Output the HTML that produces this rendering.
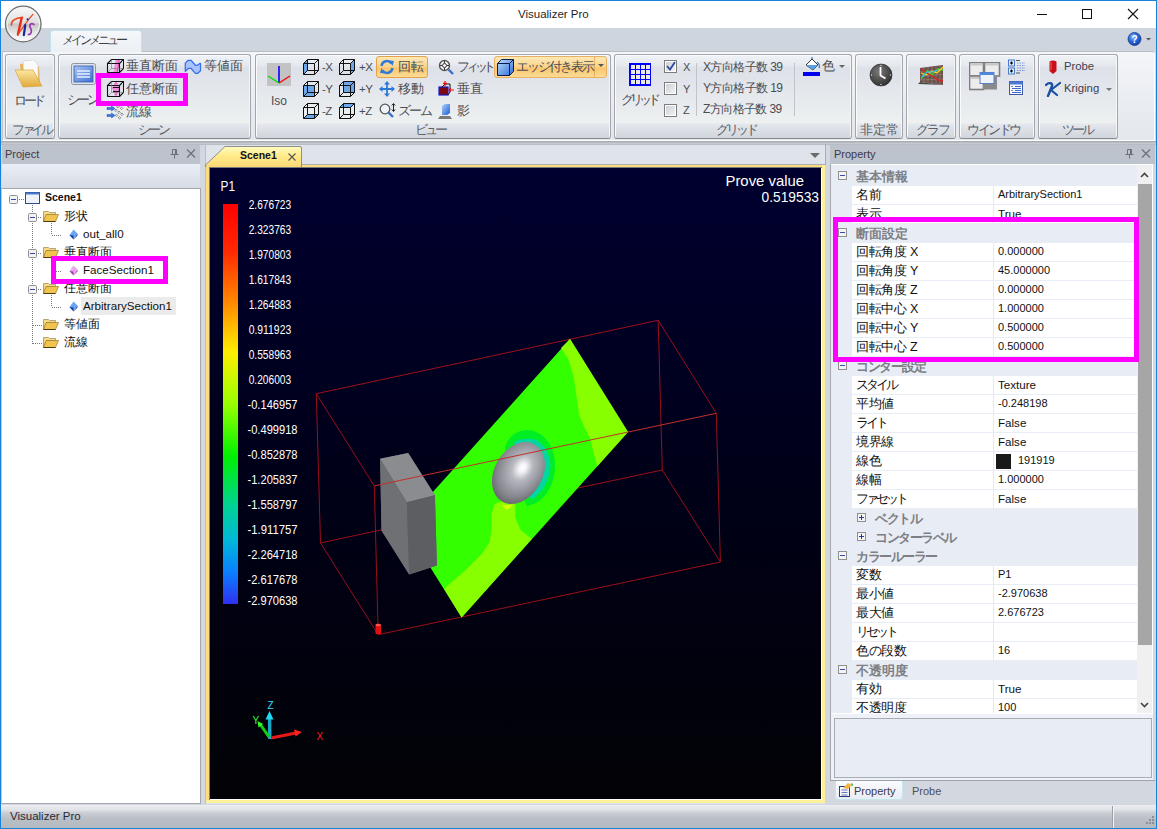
<!DOCTYPE html>
<html><head><meta charset="utf-8">
<style>
*{box-sizing:border-box;margin:0;padding:0}
html,body{width:1157px;height:829px;overflow:hidden}
body{position:relative;background:#d3d8e0;font-family:"Liberation Sans",sans-serif;font-size:12px;color:#333}
.a{position:absolute}
.t{position:absolute;white-space:nowrap;line-height:1}
/* window */
#title{left:0;top:0;width:1157px;height:28px;background:#fff}
#tabrow{left:0;top:28px;width:1157px;height:24px;background:#cfd5de}
#ribbon{left:2px;top:51px;width:1153px;height:90px;border-radius:0 4px 0 0;background:linear-gradient(#f4f6f9,#e9ecf1 60%,#e4e7ec);border:1px solid #fff;border-top-color:#b9bdc3;border-left-color:#c4c4c8}
.grp{position:absolute;top:2px;height:85px;border:1px solid #a3a7ad;border-bottom-color:#878b91;border-radius:3px;box-shadow:inset 1px 1px 0 #fafbfc,inset -1px 0 0 #f4f6f8;background:linear-gradient(#eff2f6 0,#e6e9ef 10px,#dde1e8 13px,#e5e8ed 40px,#eef1f0 68px,#e4e7ee 69px,#cfd3da 84px)}
.gl{position:absolute;bottom:1px;left:0;right:0;text-align:center;color:#595d63;font-size:13px;line-height:14px}
.rt{position:absolute;white-space:nowrap;font-size:13px;line-height:14px;color:#4a4d53}
.ph{position:absolute;top:145px;height:19px;background:#bcc3cd}
#status{left:1px;top:805px;width:1155px;height:23px;background:linear-gradient(#eceef1 0,#dfe2e6 5px,#c9cdd3 8px,#babec5 14px,#b5b9c0 23px)}
.bd{position:absolute;background:#1a82d8}
</style></head>
<body>
<div class="a" id="title"></div>
<div class="a" id="tabrow"></div>
<div class="a" style="left:1px;top:141px;width:1155px;height:4px;background:linear-gradient(#a0a4ab,#c6cad0 60%,#b2b6bd)"></div>
<div class="a" id="ribbon">
  <div class="grp" style="left:2px;width:50px"></div>
  <div class="grp" style="left:55px;width:193px"></div>
  <div class="grp" style="left:252px;width:356px"></div>
  <div class="grp" style="left:611px;width:238px"></div>
  <div class="grp" style="left:852px;width:48px"></div>
  <div class="grp" style="left:903px;width:50px"></div>
  <div class="grp" style="left:956px;width:76px"></div>
  <div class="grp" style="left:1035px;width:80px"></div>
</div>


<!-- title contents -->
<div class="t" style="left:518px;top:9px;font-size:11.5px;color:#1f1f1f">Visualizer Pro</div>
<div class="a" style="left:1037px;top:14px;width:10px;height:1px;background:#111"></div>
<div class="a" style="left:1082px;top:9px;width:10px;height:10px;border:1px solid #111"></div>
<svg class="a" style="left:1127px;top:8px" width="12" height="12"><path d="M1 1L11 11M11 1L1 11" stroke="#111" stroke-width="1.1"/></svg>
<!-- logo -->
<svg class="a" style="left:3px;top:4px" width="42" height="42" viewBox="0 0 42 42">
 <defs>
  <linearGradient id="lg1" x1="0" y1="0" x2="0" y2="1"><stop offset="0" stop-color="#fbfbfb"/><stop offset="0.47" stop-color="#dedede"/><stop offset="0.5" stop-color="#c6c6c6"/><stop offset="0.75" stop-color="#e6e6e6"/><stop offset="1" stop-color="#ffffff"/></linearGradient>
 </defs>
 <circle cx="20.25" cy="20" r="17.8" fill="url(#lg1)" stroke="#6e6e6e" stroke-width="1.2"/>
 <circle cx="20.25" cy="20" r="16.3" fill="none" stroke="#f4f4f4" stroke-width="1"/>
 <path d="M8.4 21 C8 17 12 14 19.5 13.4" stroke="#ec4a1c" stroke-width="1.6" fill="none" stroke-linecap="round"/>
 <path d="M18.6 14.2 C17.5 19 16 25 14.9 30.6" stroke="#ee2a18" stroke-width="2.4" fill="none" stroke-linecap="round"/>
 <path d="M14.9 30.6 C20 23 25 16 29.9 10.4" stroke="#e84a20" stroke-width="1.3" fill="none" stroke-linecap="round"/>
 <path d="M22.3 21 L20.8 31.2" stroke="#1828a0" stroke-width="2.2" stroke-linecap="round"/>
 <circle cx="24.6" cy="15.3" r="1.1" fill="#1a30b0"/>
 <path d="M31 20.5 C28 18.5 25.5 21 27.5 24 C29.5 27 28 31 25.3 30.5" stroke="#9a3ab0" stroke-width="1.7" fill="none" stroke-linecap="round"/>
</svg>
<!-- menu tab -->
<div class="a" style="left:50px;top:30px;width:92px;height:22px;border:1px solid #bfe3ea;border-bottom:none;border-radius:3px 3px 0 0;background:linear-gradient(#f5f7fa,#eceff4)"></div>
<div class="t" style="left:62px;top:34px;font-size:12px;color:#3d3f44;letter-spacing:-3px">メインメニュー</div>
<!-- help -->
<svg class="a" style="left:1127px;top:32px" width="28" height="14" viewBox="0 0 28 14">
 <defs><radialGradient id="hg" cx="40%" cy="35%" r="65%"><stop offset="0" stop-color="#9cc4ff"/><stop offset="0.5" stop-color="#2a6ee0"/><stop offset="1" stop-color="#1740a8"/></radialGradient></defs>
 <circle cx="7.5" cy="7" r="6.5" fill="url(#hg)" stroke="#1a3c8a" stroke-width="0.8"/>
 <text x="7.5" y="11" font-size="10" font-weight="bold" fill="#fff" text-anchor="middle" font-family="Liberation Sans">?</text>
 <path d="M19 6h5l-2.5 2.5z" fill="#555"/>
</svg>


<!-- ===== ribbon contents ===== -->
<!-- group labels -->
<div class="rt" style="left:12px;top:123px;letter-spacing:-3.5px;color:#5a5e66">ファイル</div>
<div class="rt" style="left:138px;top:123px;letter-spacing:-3px;color:#5a5e66">シーン</div>
<div class="rt" style="left:415px;top:123px;letter-spacing:-3px;color:#5a5e66">ビュー</div>
<div class="rt" style="left:716px;top:123px;letter-spacing:-3px;color:#5a5e66">グリッド</div>
<div class="rt" style="left:860px;top:123px;color:#5a5e66">非定常</div>
<div class="rt" style="left:916px;top:123px;letter-spacing:-2px;color:#5a5e66">グラフ</div>
<div class="rt" style="left:967px;top:123px;letter-spacing:-2.5px;color:#5a5e66">ウインドウ</div>
<div class="rt" style="left:1062px;top:123px;letter-spacing:-3px;color:#5a5e66">ツール</div>

<!-- File -->
<svg class="a" style="left:14px;top:60px" width="30" height="28" viewBox="0 0 30 28">
 <defs><linearGradient id="fd" x1="0" y1="0" x2="0" y2="1"><stop offset="0" stop-color="#fbe7a2"/><stop offset="1" stop-color="#e2a93a"/></linearGradient></defs>
 <path d="M6 4 L20 2 L25 7 L26 24 L8 25z" fill="#e9b350"/>
 <path d="M9 1 L20 0 L24 5 L24 20 L10 22z" fill="#fafafa" stroke="#cfcfcf" stroke-width="0.6"/>
 <path d="M1 10 L19 10 L28 26 L9 27z" fill="url(#fd)" stroke="#d69a2c" stroke-width="0.6"/>
</svg>
<div class="rt" style="left:14px;top:94px;letter-spacing:-3.5px">ロード</div>

<!-- Scene -->
<svg class="a" style="left:71px;top:63px" width="25" height="22" viewBox="0 0 25 22">
 <defs><linearGradient id="sc" x1="0" y1="0" x2="1" y2="1"><stop offset="0" stop-color="#a9c6f3"/><stop offset="1" stop-color="#3f6fd0"/></linearGradient></defs>
 <rect x="0.5" y="0.5" width="24" height="21" rx="2" fill="#dfe4ec" stroke="#8d96a3"/>
 <rect x="3" y="3" width="19" height="16" fill="url(#sc)" stroke="#2f57a8" stroke-width="0.8"/>
 <path d="M6 8h13M6 11h13M6 14h13" stroke="#e8f0ff" stroke-width="1.4"/>
</svg>
<div class="rt" style="left:67px;top:93px;letter-spacing:-3px">シーン</div>

<!-- cube with plane icons -->
<svg class="a" style="left:106px;top:58px" width="18" height="16" viewBox="106 58 18 16">
 <path d="M115.5 59.5 L119.5 59.5 L117.5 72.5 L113.5 72.5z" fill="#f58ee0"/>
 <path d="M119.3 59.5 L117.3 72.5" stroke="#e020b0" stroke-width="0.8"/>
 <g fill="none" stroke="#111" stroke-width="1.1">
  <path d="M107.5 63.5 H119.5 V72.5 H107.5z"/>
  <path d="M107.5 63.5 L111.5 59.5 H123.5 L119.5 63.5 M123.5 59.5 V68.5 L119.5 72.5"/>
 </g>
 <path d="M111.5 59.5 V68.5 H123.5 M111.5 68.5 L107.5 72.5" stroke="#777" stroke-width="0.6" fill="none"/>
</svg>
<div class="rt" style="left:126px;top:59px">垂直断面</div>
<svg class="a" style="left:184px;top:59px" width="18" height="16" viewBox="184 59 18 16">
 <path d="M185.3 63.1 L188.1 60.3 L190.9 60.3 L195.4 65.3 L197.2 65.3 L200.2 63.3 L200.5 63.3 L200.5 70.7 L197.5 73.4 L195.4 73.4 L190.9 68.3 L188.4 68.3 L185.3 71.4z" fill="#a9c4fa" stroke="#3a6ef0" stroke-width="1.3" stroke-linejoin="round"/>
</svg>
<div class="rt" style="left:204px;top:59px">等値面</div>
<svg class="a" style="left:106px;top:80px" width="18" height="18" viewBox="106 80 18 18">
 <path d="M116 81.5 L119.5 88 L116 96.5 L112.5 88z" fill="#f58ee0" stroke="#e020b0" stroke-width="0.8" stroke-dasharray="1.2 0.8"/>
 <g fill="none" stroke="#111" stroke-width="1.1">
  <path d="M107.5 85.5 H119.5 V96.5 H107.5z"/>
  <path d="M107.5 85.5 L111.5 81.5 H123.5 L119.5 85.5 M123.5 81.5 V92.5 L119.5 96.5"/>
 </g>
 <path d="M111.5 81.5 V92.5 H123.5 M111.5 92.5 L107.5 96.5" stroke="#777" stroke-width="0.6" fill="none"/>
 <path d="M113 87.5 H119 M113 91.5 H119" stroke="#111" stroke-width="1"/>
</svg>
<div class="rt" style="left:126px;top:82px">任意断面</div>
<svg class="a" style="left:106px;top:104px" width="18" height="17" viewBox="106 104 18 17">
 <path d="M107 107.5 H111.5 V106 L115 108.5 L111.5 111 V109.5 H107z M107 114.5 H111.5 V113 L115 115.5 L111.5 118 V116.5 H107z" fill="#3a78e0" stroke="#1f4fb0" stroke-width="0.5"/>
 <g fill="none" stroke="#666" stroke-width="0.7">
  <path d="M118 105.3l1.3 1.3-1.3 1.3-1.3-1.3z M121.5 107l1.3 1.3-1.3 1.3-1.3-1.3z M116 109l1.3 1.3-1.3 1.3-1.3-1.3z M119 111l1.3 1.3-1.3 1.3-1.3-1.3z M122 113l1.3 1.3-1.3 1.3-1.3-1.3z M116.5 114l1.3 1.3-1.3 1.3-1.3-1.3z M119.5 116.5l1.3 1.3-1.3 1.3-1.3-1.3z"/>
 </g>
</svg>
<div class="rt" style="left:126px;top:105px">流線</div>
<!-- magenta box scene -->
<div class="a" style="left:96px;top:73px;width:92px;height:33px;border:5px solid #ff00ff"></div>


<!-- View -->
<svg class="a" style="left:267px;top:63px" width="24" height="23" viewBox="0 0 24 23">
 <rect width="24" height="23" fill="#c3c3c3"/>
 <path d="M12 3V20" stroke="#0000ff" stroke-width="1.6"/>
 <path d="M12 20L1 13" stroke="#00e000" stroke-width="1.4"/>
 <path d="M12 20L23 13" stroke="#ff0000" stroke-width="1.4"/>
</svg>
<div class="t" style="left:271px;top:95px;font-size:12px;color:#4a4d53">Iso</div>
<svg class="a" style="left:303px;top:59px" width="17" height="17" viewBox="0 0 17 17"><path d="M0.5 4.5 L4.5 0.5 V11.5 L0.5 15.5z" fill="#6ea6ea"/><path d="M0.5 4.5h11v11h-11z M0.5 4.5 L4.5 0.5 h11 v11 l-4 4 M11.5 4.5 l4 -4 M4.5 0.5v11h11 M4.5 11.5l-4 4" fill="none" stroke="#111" stroke-width="1"/></svg><div class="t" style="left:322px;top:62px;font-size:11.5px;color:#4a4d53;letter-spacing:-0.5px">-X</div>
<svg class="a" style="left:339px;top:59px" width="17" height="17" viewBox="0 0 17 17"><path d="M11.5 4.5 L15.5 0.5 V11.5 L11.5 15.5z" fill="#6ea6ea"/><path d="M0.5 4.5h11v11h-11z M0.5 4.5 L4.5 0.5 h11 v11 l-4 4 M11.5 4.5 l4 -4 M4.5 0.5v11h11 M4.5 11.5l-4 4" fill="none" stroke="#111" stroke-width="1"/></svg><div class="t" style="left:359px;top:62px;font-size:11.5px;color:#4a4d53;letter-spacing:-0.5px">+X</div>
<svg class="a" style="left:303px;top:81px" width="17" height="17" viewBox="0 0 17 17"><path d="M0.5 4.5h11v11h-11z" fill="#6ea6ea"/><path d="M0.5 4.5h11v11h-11z M0.5 4.5 L4.5 0.5 h11 v11 l-4 4 M11.5 4.5 l4 -4 M4.5 0.5v11h11 M4.5 11.5l-4 4" fill="none" stroke="#111" stroke-width="1"/></svg><div class="t" style="left:322px;top:84px;font-size:11.5px;color:#4a4d53;letter-spacing:-0.5px">-Y</div>
<svg class="a" style="left:339px;top:81px" width="17" height="17" viewBox="0 0 17 17"><path d="M4.5 0.5h11v11h-11z" fill="#6ea6ea"/><path d="M0.5 4.5h11v11h-11z M0.5 4.5 L4.5 0.5 h11 v11 l-4 4 M11.5 4.5 l4 -4 M4.5 0.5v11h11 M4.5 11.5l-4 4" fill="none" stroke="#111" stroke-width="1"/></svg><div class="t" style="left:359px;top:84px;font-size:11.5px;color:#4a4d53;letter-spacing:-0.5px">+Y</div>
<svg class="a" style="left:303px;top:103px" width="17" height="17" viewBox="0 0 17 17"><path d="M0.5 15.5 L4.5 11.5 H15.5 L11.5 15.5z" fill="#6ea6ea"/><path d="M0.5 4.5h11v11h-11z M0.5 4.5 L4.5 0.5 h11 v11 l-4 4 M11.5 4.5 l4 -4 M4.5 0.5v11h11 M4.5 11.5l-4 4" fill="none" stroke="#111" stroke-width="1"/></svg><div class="t" style="left:322px;top:106px;font-size:11.5px;color:#4a4d53;letter-spacing:-0.5px">-Z</div>
<svg class="a" style="left:339px;top:103px" width="17" height="17" viewBox="0 0 17 17"><path d="M0.5 4.5 L4.5 0.5 H15.5 L11.5 4.5z" fill="#6ea6ea"/><path d="M0.5 4.5h11v11h-11z M0.5 4.5 L4.5 0.5 h11 v11 l-4 4 M11.5 4.5 l4 -4 M4.5 0.5v11h11 M4.5 11.5l-4 4" fill="none" stroke="#111" stroke-width="1"/></svg><div class="t" style="left:359px;top:106px;font-size:11.5px;color:#4a4d53;letter-spacing:-0.5px">+Z</div>

<div class="a" style="left:376px;top:56px;width:52px;height:22px;border:1px solid #e3a24a;border-radius:3px;background:linear-gradient(#fde9b6,#fbd28a 50%,#fac46c 55%,#fcdc95)"></div>
<svg class="a" style="left:379px;top:59px" width="16" height="16" viewBox="0 0 16 16">
 <path d="M2.5 7 A5.5 5.5 0 0 1 12.5 4.5" stroke="#2e7ad8" stroke-width="2.4" fill="none"/>
 <path d="M10 1.5 L15 2 L13.5 7z" fill="#2e7ad8"/>
 <path d="M13.5 9 A5.5 5.5 0 0 1 3.5 11.5" stroke="#2e7ad8" stroke-width="2.4" fill="none"/>
 <path d="M6 14.5 L1 14 L2.5 9z" fill="#2e7ad8"/>
</svg>
<div class="rt" style="left:398px;top:60px">回転</div>
<svg class="a" style="left:379px;top:81px" width="16" height="16" viewBox="0 0 16 16">
 <path d="M8 1v14M1 8h14" stroke="#2e7ad8" stroke-width="1.8"/>
 <path d="M8 0l3 3.5h-6z M8 16l3-3.5h-6z M0 8l3.5 3v-6z M16 8l-3.5 3v-6z" fill="#2e7ad8"/>
</svg>
<div class="rt" style="left:398px;top:82px">移動</div>
<svg class="a" style="left:379px;top:103px" width="17" height="17" viewBox="0 0 17 17">
 <circle cx="6" cy="6" r="4.8" fill="#eef3fa" stroke="#555" stroke-width="1.3"/>
 <path d="M9.5 9.5L14 14" stroke="#3a6fc8" stroke-width="2.4"/>
 <path d="M14.5 1v7M12.8 2.5l1.7-2 1.7 2M12.8 6.5l1.7 2 1.7-2" stroke="#222" stroke-width="1" fill="none"/>
</svg>
<div class="rt" style="left:398px;top:104px;letter-spacing:-2px">ズーム</div>
<svg class="a" style="left:438px;top:59px" width="16" height="16" viewBox="0 0 16 16">
 <circle cx="6.5" cy="6.5" r="5" fill="#f4f4f4" stroke="#555" stroke-width="1.4"/>
 <circle cx="6.5" cy="6.5" r="2" fill="none" stroke="#333" stroke-width="1"/>
 <path d="M6.5 2v2M6.5 9v2M2 6.5h2M9 6.5h2" stroke="#333"/>
 <path d="M10.5 10.5L15 15" stroke="#3a6fc8" stroke-width="2.4"/>
</svg>
<div class="rt" style="left:457px;top:60px;font-size:12.5px;letter-spacing:-4.2px">フィット</div>
<svg class="a" style="left:438px;top:81px" width="16" height="16" viewBox="0 0 16 16">
 <rect x="1" y="6" width="9" height="8" fill="#7a0a10" stroke="#1818d0" stroke-width="1.2"/>
 <path d="M4 6l3-3h5v8l-2 3" fill="none" stroke="#111" stroke-width="1"/>
 <path d="M7 0v5M5 2l2 1 2-1" stroke="#ff0000" stroke-width="1.2" fill="none"/>
 <path d="M11 9h5M12.5 7l-1.5 2 1.5 2" stroke="#ff0000" stroke-width="1.2" fill="none"/>
</svg>
<div class="rt" style="left:457px;top:82px">垂直</div>
<svg class="a" style="left:438px;top:103px" width="16" height="16" viewBox="0 0 16 16">
 <defs><linearGradient id="sh" x1="0" y1="0" x2="1" y2="1"><stop offset="0" stop-color="#a8d0ff"/><stop offset="1" stop-color="#1f5fd0"/></linearGradient></defs>
 <path d="M4 3l3-2h5v9l-3 2H4z" fill="url(#sh)"/>
 <path d="M2 13h10l2 3H0z" fill="#7a7a7a"/>
</svg>
<div class="rt" style="left:457px;top:104px">影</div>
<div class="a" style="left:494px;top:56px;width:113px;height:22px;border:1px solid #e8b060;border-radius:3px;background:linear-gradient(#fde9b6,#fbd28a 50%,#fac46c 55%,#fcdc95)"></div>
<div class="a" style="left:594px;top:57px;width:1px;height:20px;background:#e8b060"></div>
<svg class="a" style="left:598px;top:64px" width="6" height="4"><path d="M0 0h6l-3 3z" fill="#555"/></svg>
<svg class="a" style="left:497px;top:59px" width="17" height="17" viewBox="0 0 17 17">
 <defs><linearGradient id="ec" x1="0" y1="0" x2="1" y2="1"><stop offset="0" stop-color="#bfe0ff"/><stop offset="1" stop-color="#2a6ad8"/></linearGradient></defs>
 <path d="M0.5 4.5L4.5 0.5H16.5V12.5L12.5 16.5H0.5z" fill="url(#ec)" stroke="#0a1a50" stroke-width="1"/>
 <path d="M0.5 4.5H12.5V16.5M12.5 4.5L16.5 0.5" stroke="#0a1a50" stroke-width="1" fill="none"/>
</svg>
<div class="rt" style="left:516px;top:60px;letter-spacing:-2px">エッジ付き表示</div>

<!-- Grid -->
<svg class="a" style="left:629px;top:63px" width="22" height="23" viewBox="0 0 22 23" shape-rendering="crispEdges">
 <rect width="22" height="23" fill="#0000ff"/>
 <g fill="#e9e8e2"><rect x="2" y="2" width="4" height="4"/><rect x="7" y="2" width="4" height="4"/><rect x="12" y="2" width="4" height="4"/><rect x="17" y="2" width="4" height="4"/><rect x="2" y="7" width="4" height="4"/><rect x="7" y="7" width="4" height="4"/><rect x="12" y="7" width="4" height="4"/><rect x="17" y="7" width="4" height="4"/><rect x="2" y="12" width="4" height="4"/><rect x="7" y="12" width="4" height="4"/><rect x="12" y="12" width="4" height="4"/><rect x="17" y="12" width="4" height="4"/><rect x="2" y="17" width="4" height="4"/><rect x="7" y="17" width="4" height="4"/><rect x="12" y="17" width="4" height="4"/><rect x="17" y="17" width="4" height="4"/></g>
</svg>
<div class="rt" style="left:621px;top:93px;letter-spacing:-4px">グリッド</div>
<div class="a" style="left:664px;top:60px;width:13px;height:13px;border:1px solid #7c7c7c;box-shadow:inset 0 0 0 1px #fff;background:linear-gradient(135deg,#c9ccd2,#f4f5f7)"></div>
<svg class="a" style="left:666px;top:61px" width="10" height="10"><path d="M1 5l3 3.5L9 1" stroke="#2a4a9a" stroke-width="1.8" fill="none"/></svg>
<div class="a" style="left:664px;top:82px;width:13px;height:13px;border:1px solid #7c7c7c;box-shadow:inset 0 0 0 1px #fff;background:linear-gradient(135deg,#c9ccd2,#f4f5f7)"></div>
<div class="a" style="left:664px;top:104px;width:13px;height:13px;border:1px solid #7c7c7c;box-shadow:inset 0 0 0 1px #fff;background:linear-gradient(135deg,#c9ccd2,#f4f5f7)"></div>
<div class="t" style="left:683px;top:62px;font-size:11px;color:#4a4d53">X</div>
<div class="t" style="left:683px;top:84px;font-size:11px;color:#4a4d53">Y</div>
<div class="t" style="left:683px;top:105px;font-size:11px;color:#4a4d53">Z</div>
<div class="a" style="left:696px;top:63px;width:1px;height:53px;background:#c0c4ca"></div>
<div class="rt" style="left:703px;top:60px;font-size:12px;letter-spacing:-0.6px">X方向格子数 39</div>
<div class="rt" style="left:703px;top:81px;font-size:12px;letter-spacing:-0.6px">Y方向格子数 19</div>
<div class="rt" style="left:703px;top:102px;font-size:12px;letter-spacing:-0.6px">Z方向格子数 39</div>
<div class="a" style="left:794px;top:63px;width:1px;height:53px;background:#c0c4ca"></div>
<svg class="a" style="left:803px;top:57px" width="18" height="19" viewBox="0 0 18 19">
 <path d="M3 8l6-6 6 6-5 5z" fill="#fff" stroke="#333" stroke-width="1"/>
 <path d="M3 8h12l-5 5z" fill="#5aa0e8"/>
 <path d="M9 2l0-2M14 5c2 1 3 4 2 6" stroke="#3a70c8" stroke-width="1.2" fill="none"/>
 <rect x="0" y="15" width="17" height="4" fill="#0000ee"/>
</svg>
<div class="rt" style="left:822px;top:59px">色</div>
<svg class="a" style="left:839px;top:65px" width="6" height="4"><path d="M0 0h6l-3 3z" fill="#666"/></svg>

<!-- 非定常 -->
<svg class="a" style="left:869px;top:63px" width="24" height="24" viewBox="0 0 24 24">
 <defs><radialGradient id="ck" cx="40%" cy="35%" r="70%"><stop offset="0" stop-color="#7a7a7a"/><stop offset="1" stop-color="#2e2e2e"/></radialGradient></defs>
 <circle cx="12" cy="12" r="11" fill="url(#ck)" stroke="#222" stroke-width="0.6"/>
 <path d="M11.5 4v8.5l5 3" stroke="#fff" stroke-width="1.8" fill="none"/>
 <g fill="#ddd"><circle cx="12" cy="2.5" r="0.7"/><circle cx="12" cy="21.5" r="0.7"/><circle cx="2.5" cy="12" r="0.7"/><circle cx="21.5" cy="12" r="0.7"/></g>
</svg>
<!-- graph -->
<svg class="a" style="left:918px;top:65px" width="26" height="20" viewBox="0 0 26 20">
 <path d="M2 3 L25 0 L25 20 L2 17z" fill="#6a5048"/>
 <path d="M0 19 L2 17 L25 20z" fill="#4a4a4a"/>
 <g stroke="#a08880" stroke-width="0.6"><path d="M6 2.5V17.5M10 2V18M14 1.5V18.5M18 1V19M22 0.5V19.5M2 7l23-2M2 11l23-1.5M2 15l23-1"/></g>
 <path d="M3 14 L9 6 L14 10 L20 4 L25 5" stroke="#30e030" stroke-width="1.3" fill="none"/>
 <path d="M3 8 L8 10 L14 6 L19 8 L25 2" stroke="#ffd020" stroke-width="1.3" fill="none"/>
 <path d="M3 4 L9 8 L14 11 L20 15 L25 16" stroke="#e02020" stroke-width="1.3" fill="none"/>
 <path d="M4 12 L9 7 L14 7 L20 5" stroke="#30c0f0" stroke-width="1.1" fill="none"/>
</svg>
<!-- window -->
<svg class="a" style="left:969px;top:62px" width="32" height="29" viewBox="0 0 32 29">
 <rect x="0.5" y="0.5" width="14" height="13.5" fill="#ececec" stroke="#7e7e7e" stroke-width="1.6"/>
 <rect x="15.5" y="0.5" width="15" height="13.5" fill="#ececec" stroke="#7e7e7e" stroke-width="1.6"/>
 <rect x="0.5" y="14" width="14" height="13.5" fill="#ececec" stroke="#7e7e7e" stroke-width="1.6"/>
 <rect x="1.5" y="1.5" width="12" height="2" fill="#c8c8c8"/><rect x="16.5" y="1.5" width="13" height="2" fill="#c8c8c8"/><rect x="1.5" y="15" width="12" height="2" fill="#c8c8c8"/>
 <rect x="14" y="14" width="14" height="13.5" fill="#8a8a8a"/>
 <rect x="11" y="10.5" width="14" height="11" fill="#eef2fa" stroke="#5a7ec8" stroke-width="1"/>
 <rect x="11" y="10.5" width="14" height="2.5" fill="#4f86de"/>
</svg>
<svg class="a" style="left:1008px;top:59px" width="17" height="17" viewBox="0 0 17 17">
 <rect x="0.5" y="1" width="6" height="6" fill="#dfeefc" stroke="#4a7ad0"/><path d="M2 4h3M3.5 2.5v3" stroke="#000" stroke-width="1.2"/>
 <rect x="0.5" y="9" width="6" height="6" fill="#dfeefc" stroke="#4a7ad0"/><path d="M2 12h3M3.5 10.5v3" stroke="#000" stroke-width="1.2"/>
 <path d="M8 1.5h4M8 14h4" stroke="#555" stroke-width="1"/>
 <path d="M9 4h8M9 6.5h8M9 9h8M9 11.5h8" stroke="#6a8ad8" stroke-width="0.9" stroke-dasharray="1.5 1"/>
</svg>
<svg class="a" style="left:1009px;top:81px" width="14" height="14" viewBox="0 0 14 14">
 <rect x="0.5" y="0.5" width="13" height="13" fill="#f6f8fc" stroke="#3a5aa8"/>
 <rect x="0.5" y="0.5" width="13" height="3" fill="#4a7ad8"/>
 <path d="M6 5.5h6M3 7.5h9M6 9.5h6M3 11.5h9" stroke="#3a6ad0" stroke-width="1"/>
 <path d="M2 5.5h2M2 9.5h2" stroke="#888" stroke-width="1"/>
</svg>
<!-- tools -->
<svg class="a" style="left:1049px;top:60px" width="8" height="14" viewBox="0 0 8 14">
 <path d="M0.5 1.5 Q4 -0.5 7.5 1.5 V11 L4 14 L0.5 11z" fill="#c8101a"/>
 <path d="M2 2v8" stroke="#f06060" stroke-width="1"/>
</svg>
<div class="t" style="left:1064px;top:61px;font-size:11.3px;color:#3d3f50">Probe</div>
<svg class="a" style="left:1045px;top:81px" width="16" height="16" viewBox="0 0 16 16">
 <path d="M1 4 C4 1 8 2 7 5 L3 15" stroke="#1a50a0" stroke-width="2.4" fill="none" stroke-linecap="round"/>
 <path d="M15 2 L6 9 L12 14" stroke="#1a50a0" stroke-width="2.2" fill="none" stroke-linecap="round"/>
</svg>
<div class="t" style="left:1064px;top:83px;font-size:11.3px;color:#3d3f50">Kriging</div>
<svg class="a" style="left:1106px;top:88px" width="6" height="4"><path d="M0 0h6l-3 3z" fill="#777"/></svg>

<!-- project panel -->
<div class="ph" style="left:2px;width:198px"></div>
<div class="a" style="left:2px;top:164px;width:198px;height:24px;background:linear-gradient(#eaeef7,#d7dbe3)"></div>
<div class="a" style="left:1px;top:188px;width:200px;height:616px;background:#fff;border:1px solid #a3a6ab;border-left-color:#c9ccd1"></div>


<!-- project panel contents -->
<div class="t" style="left:5px;top:149px;font-size:11px;color:#3d3848">Project</div>
<svg class="a" style="left:170px;top:149px" width="9" height="10" viewBox="0 0 9 10"><path d="M2.5 0.5h4v5h-4z M0.5 5.5h8 M4.5 5.5v4" stroke="#6d7075" stroke-width="1" fill="none"/><path d="M5.5 1v4.5" stroke="#6d7075"/></svg>
<svg class="a" style="left:186px;top:149px" width="10" height="9" viewBox="0 0 10 9"><path d="M1 0.5L9 8.5M9 0.5L1 8.5" stroke="#6d7075" stroke-width="1.2"/></svg>
<svg class="a" style="left:9px;top:195px" width="9" height="9" viewBox="0 0 9 9"><rect x="0.5" y="0.5" width="8" height="8" rx="1" fill="#f3f3f3" stroke="#8e8f8f"/><path d="M2 4.5h5" stroke="#3a4ab0" stroke-width="1"/></svg><div class="a" style="left:19px;top:199px;width:5px;height:1px;background-image:linear-gradient(90deg,#777 1px,transparent 1px);background-size:2px 1px"></div><svg class="a" style="left:25px;top:192px" width="15" height="12" viewBox="0 0 15 12"><rect x="0.5" y="0.5" width="14" height="11" fill="#eef2fb" stroke="#2a4a8a"/><rect x="0.5" y="0.5" width="14" height="2" fill="#4a7ad0"/></svg><div class="t" style="left:45px;top:192px;font-size:10.5px;font-weight:bold;color:#111">Scene1</div><div class="a" style="left:32px;top:205px;width:1px;height:139px;background-image:linear-gradient(#777 1px,transparent 1px);background-size:1px 2px"></div><svg class="a" style="left:28px;top:213px" width="9" height="9" viewBox="0 0 9 9"><rect x="0.5" y="0.5" width="8" height="8" rx="1" fill="#f3f3f3" stroke="#8e8f8f"/><path d="M2 4.5h5" stroke="#3a4ab0" stroke-width="1"/></svg><div class="a" style="left:38px;top:217px;width:4px;height:1px;background-image:linear-gradient(90deg,#777 1px,transparent 1px);background-size:2px 1px"></div><svg class="a" style="left:43px;top:210px" width="16" height="12" viewBox="0 0 16 12"><path d="M0.5 1.5h5l1 1h6v2h-9l-3 7z" fill="#f6dc8a" stroke="#9a8450" stroke-width="0.7"/><path d="M3 4.5h12.5l-3 7h-12z" fill="#f2c44e" stroke="#9a7a30" stroke-width="0.7"/><path d="M0.5 11.5h12" stroke="#4a3a10" stroke-width="1"/></svg><div class="t" style="left:64px;top:210px;font-size:12px;color:#111">形状</div><div class="a" style="left:51px;top:223px;width:1px;height:12px;background-image:linear-gradient(#777 1px,transparent 1px);background-size:1px 2px"></div><div class="a" style="left:52px;top:235px;width:10px;height:1px;background-image:linear-gradient(90deg,#777 1px,transparent 1px);background-size:2px 1px"></div><svg class="a" style="left:69px;top:229px" width="9" height="11" viewBox="0 0 9 11"><path d="M4.5 0.5L8.5 4.5L4.5 10.5L0.5 6z" fill="#6aa6f0"/><path d="M4.5 10.5L8.5 4.5L8.5 6.5z M0.5 6L4.5 6.5L4.5 10.5z" fill="#1a3aa8"/></svg><div class="t" style="left:83px;top:228px;font-size:11.6px;color:#111">out_all0</div><svg class="a" style="left:28px;top:249px" width="9" height="9" viewBox="0 0 9 9"><rect x="0.5" y="0.5" width="8" height="8" rx="1" fill="#f3f3f3" stroke="#8e8f8f"/><path d="M2 4.5h5" stroke="#3a4ab0" stroke-width="1"/></svg><div class="a" style="left:38px;top:253px;width:4px;height:1px;background-image:linear-gradient(90deg,#777 1px,transparent 1px);background-size:2px 1px"></div><svg class="a" style="left:43px;top:246px" width="16" height="12" viewBox="0 0 16 12"><path d="M0.5 1.5h5l1 1h6v2h-9l-3 7z" fill="#f6dc8a" stroke="#9a8450" stroke-width="0.7"/><path d="M3 4.5h12.5l-3 7h-12z" fill="#f2c44e" stroke="#9a7a30" stroke-width="0.7"/><path d="M0.5 11.5h12" stroke="#4a3a10" stroke-width="1"/></svg><div class="t" style="left:64px;top:246px;font-size:12px;color:#111">垂直断面</div><div class="a" style="left:51px;top:259px;width:1px;height:12px;background-image:linear-gradient(#777 1px,transparent 1px);background-size:1px 2px"></div><div class="a" style="left:52px;top:271px;width:10px;height:1px;background-image:linear-gradient(90deg,#777 1px,transparent 1px);background-size:2px 1px"></div><svg class="a" style="left:69px;top:265px" width="9" height="11" viewBox="0 0 9 11"><path d="M4.5 0.5L8.5 4.5L4.5 10.5L0.5 6z" fill="#e8a6f0"/><path d="M4.5 10.5L8.5 4.5L8.5 6.5z M0.5 6L4.5 6.5L4.5 10.5z" fill="#a040b0"/></svg><div class="t" style="left:83px;top:264px;font-size:11.6px;color:#111">FaceSection1</div><svg class="a" style="left:28px;top:285px" width="9" height="9" viewBox="0 0 9 9"><rect x="0.5" y="0.5" width="8" height="8" rx="1" fill="#f3f3f3" stroke="#8e8f8f"/><path d="M2 4.5h5" stroke="#3a4ab0" stroke-width="1"/></svg><div class="a" style="left:38px;top:289px;width:4px;height:1px;background-image:linear-gradient(90deg,#777 1px,transparent 1px);background-size:2px 1px"></div><svg class="a" style="left:43px;top:282px" width="16" height="12" viewBox="0 0 16 12"><path d="M0.5 1.5h5l1 1h6v2h-9l-3 7z" fill="#f6dc8a" stroke="#9a8450" stroke-width="0.7"/><path d="M3 4.5h12.5l-3 7h-12z" fill="#f2c44e" stroke="#9a7a30" stroke-width="0.7"/><path d="M0.5 11.5h12" stroke="#4a3a10" stroke-width="1"/></svg><div class="t" style="left:64px;top:282px;font-size:12px;color:#111">任意断面</div><div class="a" style="left:51px;top:295px;width:1px;height:12px;background-image:linear-gradient(#777 1px,transparent 1px);background-size:1px 2px"></div><div class="a" style="left:52px;top:307px;width:10px;height:1px;background-image:linear-gradient(90deg,#777 1px,transparent 1px);background-size:2px 1px"></div><div class="a" style="left:81px;top:297px;width:95px;height:18px;background:#ebebeb"></div><svg class="a" style="left:69px;top:301px" width="9" height="11" viewBox="0 0 9 11"><path d="M4.5 0.5L8.5 4.5L4.5 10.5L0.5 6z" fill="#6aa6f0"/><path d="M4.5 10.5L8.5 4.5L8.5 6.5z M0.5 6L4.5 6.5L4.5 10.5z" fill="#1a3aa8"/></svg><div class="t" style="left:83px;top:300px;font-size:11.6px;color:#111">ArbitrarySection1</div><div class="a" style="left:33px;top:325px;width:9px;height:1px;background-image:linear-gradient(90deg,#777 1px,transparent 1px);background-size:2px 1px"></div><svg class="a" style="left:43px;top:318px" width="16" height="12" viewBox="0 0 16 12"><path d="M0.5 1.5h5l1 1h6v2h-9l-3 7z" fill="#f6dc8a" stroke="#9a8450" stroke-width="0.7"/><path d="M3 4.5h12.5l-3 7h-12z" fill="#f2c44e" stroke="#9a7a30" stroke-width="0.7"/><path d="M0.5 11.5h12" stroke="#4a3a10" stroke-width="1"/></svg><div class="t" style="left:64px;top:318px;font-size:12px;color:#111">等値面</div><div class="a" style="left:33px;top:343px;width:9px;height:1px;background-image:linear-gradient(90deg,#777 1px,transparent 1px);background-size:2px 1px"></div><svg class="a" style="left:43px;top:336px" width="16" height="12" viewBox="0 0 16 12"><path d="M0.5 1.5h5l1 1h6v2h-9l-3 7z" fill="#f6dc8a" stroke="#9a8450" stroke-width="0.7"/><path d="M3 4.5h12.5l-3 7h-12z" fill="#f2c44e" stroke="#9a7a30" stroke-width="0.7"/><path d="M0.5 11.5h12" stroke="#4a3a10" stroke-width="1"/></svg><div class="t" style="left:64px;top:336px;font-size:12px;color:#111">流線</div><div class="a" style="left:51px;top:256px;width:117px;height:28px;border:5px solid #ff00ff"></div>
<!-- doc area -->
<div class="a" style="left:205px;top:144px;width:620px;height:660px;background:#dfe3ea;border-left:1px solid #b9bec6;border-top:1px solid #b9bec6"></div>
<div class="a" style="left:205px;top:164px;width:621px;height:1px;background:#a9adb4"></div>
<div class="a" style="left:825px;top:144px;width:1px;height:21px;background:#a9adb4"></div>
<div class="a" style="left:206px;top:165px;width:619px;height:638px;background:#fcdc7e"></div>
<div class="a" style="left:822px;top:165px;width:3px;height:638px;background:#fdf09a"></div>
<div class="a" style="left:206px;top:800px;width:619px;height:3px;background:#fdf09a"></div>
<div class="a" style="left:209px;top:167px;width:613px;height:633px;background:#fff;border-left:1px solid #7a7a7a;border-top:1px solid #7a7a7a"></div>
<div class="a" id="view" style="left:210px;top:168px;width:611px;height:631px;background:linear-gradient(#000030,#000018 50%,#020206)"></div>


<!-- doc tab -->
<svg class="a" style="left:205px;top:145px" width="100" height="22" viewBox="0 0 100 22">
 <defs><linearGradient id="tb" x1="0" y1="0" x2="0" y2="1"><stop offset="0" stop-color="#fffcc0"/><stop offset="0.45" stop-color="#ffeb8a"/><stop offset="1" stop-color="#fcd876"/></linearGradient></defs>
 <path d="M0.5 20 L20 1.5 H95 Q96.5 1.5 96.5 3 V22 H0.5z" fill="url(#tb)" stroke="#8e8e8e" stroke-width="1"/>
 <path d="M1.5 21 H96" stroke="#fcd876" stroke-width="2"/>
</svg>
<div class="t" style="left:240px;top:150px;font-size:10.5px;font-weight:bold;color:#111">Scene1</div>
<svg class="a" style="left:288px;top:153px" width="8" height="8" viewBox="0 0 8 8"><path d="M0.5 0.5L7.5 7.5M7.5 0.5L0.5 7.5" stroke="#555" stroke-width="1.1"/></svg>
<svg class="a" style="left:810px;top:153px" width="10" height="6"><path d="M0 0h10l-5 5z" fill="#6c6c6c"/></svg>


<svg class="a" style="left:210px;top:168px" width="611" height="631" viewBox="210 168 611 631">
 <defs>
  <linearGradient id="cb" x1="0" y1="0" x2="0" y2="1">
   <stop offset="0" stop-color="#ff0000"/><stop offset="0.12" stop-color="#ff2a00"/><stop offset="0.25" stop-color="#ff8c00"/><stop offset="0.37" stop-color="#ffee00"/><stop offset="0.5" stop-color="#99ff00"/><stop offset="0.63" stop-color="#00f000"/><stop offset="0.75" stop-color="#00d490"/><stop offset="0.84" stop-color="#00b8d8"/><stop offset="0.92" stop-color="#0a80ff"/><stop offset="1" stop-color="#3030f0"/>
  </linearGradient>
  <radialGradient id="sp" cx="0.5" cy="0.42" r="0.66" fx="0.52" fy="0.4">
   <stop offset="0" stop-color="#ffffff"/><stop offset="0.1" stop-color="#f4f4fa"/><stop offset="0.3" stop-color="#b8b8c0"/><stop offset="0.7" stop-color="#86868e"/><stop offset="1" stop-color="#55555c"/>
  </radialGradient>
 </defs>
 <g fill="#fff" font-family="Liberation Sans" font-size="12">
  <text x="220.5" y="191" font-size="14" textLength="14.5" lengthAdjust="spacingAndGlyphs">P1</text>
  <text x="248.7" y="208.8" textLength="42.5" lengthAdjust="spacingAndGlyphs">2.676723</text><text x="248.7" y="233.8" textLength="42.5" lengthAdjust="spacingAndGlyphs">2.323763</text><text x="248.7" y="258.8" textLength="42.5" lengthAdjust="spacingAndGlyphs">1.970803</text><text x="248.7" y="283.8" textLength="42.5" lengthAdjust="spacingAndGlyphs">1.617843</text><text x="248.7" y="308.8" textLength="42.5" lengthAdjust="spacingAndGlyphs">1.264883</text><text x="248.7" y="333.8" textLength="42.5" lengthAdjust="spacingAndGlyphs">0.911923</text><text x="248.7" y="358.8" textLength="42.5" lengthAdjust="spacingAndGlyphs">0.558963</text><text x="248.7" y="383.8" textLength="42.5" lengthAdjust="spacingAndGlyphs">0.206003</text><text x="247.5" y="408.8" textLength="50" lengthAdjust="spacingAndGlyphs">-0.146957</text><text x="247.5" y="433.8" textLength="50" lengthAdjust="spacingAndGlyphs">-0.499918</text><text x="247.5" y="458.8" textLength="50" lengthAdjust="spacingAndGlyphs">-0.852878</text><text x="247.5" y="483.8" textLength="50" lengthAdjust="spacingAndGlyphs">-1.205837</text><text x="247.5" y="508.8" textLength="50" lengthAdjust="spacingAndGlyphs">-1.558797</text><text x="247.5" y="533.8" textLength="50" lengthAdjust="spacingAndGlyphs">-1.911757</text><text x="247.5" y="558.8" textLength="50" lengthAdjust="spacingAndGlyphs">-2.264718</text><text x="247.5" y="583.8" textLength="50" lengthAdjust="spacingAndGlyphs">-2.617678</text><text x="247.5" y="605.3" textLength="50" lengthAdjust="spacingAndGlyphs">-2.970638</text>
  <text x="725.5" y="186" font-size="15" textLength="78.5" lengthAdjust="spacingAndGlyphs">Prove value</text>
  <text x="761.5" y="201.5" font-size="14.6" textLength="57.5" lengthAdjust="spacingAndGlyphs">0.519533</text>
 </g>
 <rect x="223" y="204" width="15" height="400" fill="url(#cb)"/>
 <g stroke="#9a0f1a" stroke-width="1" fill="none">
  <path d="M320.5 542.9L662.3 470 M316.3 393.7L658.2 320.3 M658.2 320.3L716.3 413.3 M316.3 393.7L374.3 485.9 M316.3 393.7L320.5 542.9 M658.2 320.3L662.3 470 M716.3 413.3L720.4 562 M662.3 470L720.4 562 M374.3 485.9L378.2 634.7 M320.5 542.9L378.2 634.7 M378.2 634.7L720.4 562"/>
 </g>
 <path d="M570 339 L628 432 L461.6 617.6 L403.6 524.6z" fill="#33ff00"/>
 <path d="M561 348 L570 339 L628 432 L597.3 466.2 L593.7 453 L590 438.5 L584.6 427.7 L579.2 415 L576.3 395.1 L573.8 377 L568.3 358.9z" fill="#88ff00"/>
 <path d="M444.2 589.1 L450.7 583 L465 570.7 L481.5 554.3 L489.7 542 L491.7 527.6 L491.7 513.3 L494.8 504 L502 501 L515.3 504 L515.3 517.4 L520.4 529.7 L531.7 539 L461.6 617.6z" fill="#88ff00"/>
 <path d="M502 505 L507 510 L513 505z" fill="#d8ff00"/>
 <path d="M505 448 C508 437 516 431 526 430 C541 430 553 442 555 462 C556 482 547 497 536 503 L527 506 L515 480z" fill="#00ee22"/>
 <path d="M514 442 C520 438 530 438 537 440 C546 447 550 455 550.5 465 C550 480 544 490 532 500 L520 480z" fill="#00d8a0"/>
 <ellipse cx="518.5" cy="473" rx="24" ry="33" transform="rotate(30 518.5 473)" fill="url(#sp)"/>
 <path d="M380.1 458.7 L408.2 453 L434.9 495.2 L436.9 565.4 L409.2 574.6 L381.5 530.5z" fill="#666669"/>
 <path d="M380.1 458.7 L408.2 453 L434.9 495.2 L406.8 502.2z" fill="#8b8c90"/>
 <path d="M380.1 458.7 L406.8 502.2 L409.2 574.6 L381.5 530.5z" fill="#6f7073"/>
 <path d="M406.8 502.2 L434.9 495.2 L436.9 565.4 L409.2 574.6z" fill="#5d5e62"/>
 <path d="M374.3 485.9L716.3 413.3" stroke="#c0302a" stroke-width="1" fill="none"/>
 <path d="M375.5 625 h5.5 v9 h-5.5z" fill="#e01010"/><ellipse cx="378.2" cy="625" rx="2.8" ry="1.2" fill="#ff5050"/>
 <!-- triad -->
 <path d="M269.8 739 L269.6 718" stroke="#18a8c8" stroke-width="3.4"/>
 <path d="M269.5 711 L273.5 719.5 L265.5 719.5z" fill="#20d8f0"/>
 <path d="M269 737 L260 724" stroke="#10d010" stroke-width="3"/>
 <path d="M257.5 721 L263 724 L258.5 727.5z" fill="#30ff30"/>
 <path d="M271 738 L296 733" stroke="#e81818" stroke-width="3"/>
 <path d="M302 732 L294 729.5 L295.5 736.5z" fill="#ff2020"/>
 <g font-family="Liberation Sans" font-size="10">
  <text x="267.5" y="709" fill="#30e0ff">Z</text>
  <text x="252.5" y="724" fill="#30ff30">Y</text>
  <text x="316.5" y="740" fill="#ff2020">X</text>
 </g>
</svg>

<!-- property panel -->
<div class="ph" style="left:830px;width:325px"></div>
<div class="a" style="left:830px;top:164px;width:323px;height:617px;background:#fff;border-left:1px solid #a3a6ab"></div>


<!-- property panel contents -->
<div class="t" style="left:834px;top:149px;font-size:11px;color:#3d3848">Property</div>
<svg class="a" style="left:1125px;top:149px" width="9" height="10" viewBox="0 0 9 10"><path d="M2.5 0.5h4v5h-4z M0.5 5.5h8 M4.5 5.5v4" stroke="#6d7075" stroke-width="1" fill="none"/><path d="M5.5 1v4.5" stroke="#6d7075"/></svg>
<svg class="a" style="left:1141px;top:149px" width="10" height="9" viewBox="0 0 10 9"><path d="M1 0.5L9 8.5M9 0.5L1 8.5" stroke="#6d7075" stroke-width="1.2"/></svg>
<div class="a" style="left:831px;top:165px;width:306px;height:548px;background:#e8ecf5;overflow:hidden">
<svg class="a" style="left:7px;top:6px" width="9" height="9" viewBox="0 0 9 9"><rect x="0.5" y="0.5" width="8" height="8" fill="#f4f4f4" stroke="#909090"/><path d="M2 4.5h5" stroke="#3a4ab0" stroke-width="1"/></svg><div class="t" style="left:25px;top:5px;font-size:13px;font-weight:bold;color:#7d7f84;letter-spacing:0">基本情報</div><div class="a" style="left:21px;top:21px;width:285px;height:18px;background:#fff"></div><div class="a" style="left:162px;top:21px;width:1px;height:18px;background:#e6e9f1"></div><div class="t" style="left:25px;top:24px;font-size:12.5px;color:#111;letter-spacing:-0.3px">名前</div><div class="t" style="left:167px;top:24px;font-size:11px;color:#111">ArbitrarySection1</div><div class="a" style="left:21px;top:40px;width:285px;height:18px;background:#fff"></div><div class="a" style="left:162px;top:40px;width:1px;height:18px;background:#e6e9f1"></div><div class="t" style="left:25px;top:43px;font-size:12.5px;color:#111;letter-spacing:-0.3px">表示</div><div class="t" style="left:167px;top:43px;font-size:11.6px;color:#111">True</div><svg class="a" style="left:7px;top:63px" width="9" height="9" viewBox="0 0 9 9"><rect x="0.5" y="0.5" width="8" height="8" fill="#f4f4f4" stroke="#909090"/><path d="M2 4.5h5" stroke="#3a4ab0" stroke-width="1"/></svg><div class="t" style="left:25px;top:62px;font-size:13px;font-weight:bold;color:#7d7f84;letter-spacing:0">断面設定</div><div class="a" style="left:21px;top:78px;width:285px;height:18px;background:#fff"></div><div class="a" style="left:162px;top:78px;width:1px;height:18px;background:#e6e9f1"></div><div class="t" style="left:25px;top:81px;font-size:12.5px;color:#111;letter-spacing:-0.3px">回転角度 X</div><div class="t" style="left:167px;top:81px;font-size:11px;color:#111">0.000000</div><div class="a" style="left:21px;top:97px;width:285px;height:18px;background:#fff"></div><div class="a" style="left:162px;top:97px;width:1px;height:18px;background:#e6e9f1"></div><div class="t" style="left:25px;top:100px;font-size:12.5px;color:#111;letter-spacing:-0.3px">回転角度 Y</div><div class="t" style="left:167px;top:100px;font-size:11px;color:#111">45.000000</div><div class="a" style="left:21px;top:116px;width:285px;height:18px;background:#fff"></div><div class="a" style="left:162px;top:116px;width:1px;height:18px;background:#e6e9f1"></div><div class="t" style="left:25px;top:119px;font-size:12.5px;color:#111;letter-spacing:-0.3px">回転角度 Z</div><div class="t" style="left:167px;top:119px;font-size:11px;color:#111">0.000000</div><div class="a" style="left:21px;top:135px;width:285px;height:18px;background:#fff"></div><div class="a" style="left:162px;top:135px;width:1px;height:18px;background:#e6e9f1"></div><div class="t" style="left:25px;top:138px;font-size:12.5px;color:#111;letter-spacing:-0.3px">回転中心 X</div><div class="t" style="left:167px;top:138px;font-size:11px;color:#111">1.000000</div><div class="a" style="left:21px;top:154px;width:285px;height:18px;background:#fff"></div><div class="a" style="left:162px;top:154px;width:1px;height:18px;background:#e6e9f1"></div><div class="t" style="left:25px;top:157px;font-size:12.5px;color:#111;letter-spacing:-0.3px">回転中心 Y</div><div class="t" style="left:167px;top:157px;font-size:11px;color:#111">0.500000</div><div class="a" style="left:21px;top:173px;width:285px;height:18px;background:#fff"></div><div class="a" style="left:162px;top:173px;width:1px;height:18px;background:#e6e9f1"></div><div class="t" style="left:25px;top:176px;font-size:12.5px;color:#111;letter-spacing:-0.3px">回転中心 Z</div><div class="t" style="left:167px;top:176px;font-size:11px;color:#111">0.500000</div><svg class="a" style="left:7px;top:196px" width="9" height="9" viewBox="0 0 9 9"><rect x="0.5" y="0.5" width="8" height="8" fill="#f4f4f4" stroke="#909090"/><path d="M2 4.5h5" stroke="#3a4ab0" stroke-width="1"/></svg><div class="t" style="left:25px;top:195px;font-size:13px;font-weight:bold;color:#7d7f84;letter-spacing:-1.5px">コンター設定</div><div class="a" style="left:21px;top:211px;width:285px;height:18px;background:#fff"></div><div class="a" style="left:162px;top:211px;width:1px;height:18px;background:#e6e9f1"></div><div class="t" style="left:25px;top:214px;font-size:12.5px;color:#111;letter-spacing:-3px">スタイル</div><div class="t" style="left:167px;top:214px;font-size:11.6px;color:#111">Texture</div><div class="a" style="left:21px;top:230px;width:285px;height:18px;background:#fff"></div><div class="a" style="left:162px;top:230px;width:1px;height:18px;background:#e6e9f1"></div><div class="t" style="left:25px;top:233px;font-size:12.5px;color:#111;letter-spacing:-0.3px">平均値</div><div class="t" style="left:167px;top:233px;font-size:11px;color:#111">-0.248198</div><div class="a" style="left:21px;top:249px;width:285px;height:18px;background:#fff"></div><div class="a" style="left:162px;top:249px;width:1px;height:18px;background:#e6e9f1"></div><div class="t" style="left:25px;top:252px;font-size:12.5px;color:#111;letter-spacing:-3px">ライト</div><div class="t" style="left:167px;top:252px;font-size:11.6px;color:#111">False</div><div class="a" style="left:21px;top:268px;width:285px;height:18px;background:#fff"></div><div class="a" style="left:162px;top:268px;width:1px;height:18px;background:#e6e9f1"></div><div class="t" style="left:25px;top:271px;font-size:12.5px;color:#111;letter-spacing:-0.3px">境界線</div><div class="t" style="left:167px;top:271px;font-size:11.6px;color:#111">False</div><div class="a" style="left:21px;top:287px;width:285px;height:18px;background:#fff"></div><div class="a" style="left:162px;top:287px;width:1px;height:18px;background:#e6e9f1"></div><div class="t" style="left:25px;top:290px;font-size:12.5px;color:#111;letter-spacing:-0.3px">線色</div><div class="a" style="left:165px;top:289px;width:15px;height:15px;background:#191919"></div><div class="t" style="left:187px;top:290px;font-size:11px;color:#111">191919</div><div class="a" style="left:21px;top:306px;width:285px;height:18px;background:#fff"></div><div class="a" style="left:162px;top:306px;width:1px;height:18px;background:#e6e9f1"></div><div class="t" style="left:25px;top:309px;font-size:12.5px;color:#111;letter-spacing:-0.3px">線幅</div><div class="t" style="left:167px;top:309px;font-size:11px;color:#111">1.000000</div><div class="a" style="left:21px;top:325px;width:285px;height:18px;background:#fff"></div><div class="a" style="left:162px;top:325px;width:1px;height:18px;background:#e6e9f1"></div><div class="t" style="left:25px;top:328px;font-size:12.5px;color:#111;letter-spacing:-3px">ファセット</div><div class="t" style="left:167px;top:328px;font-size:11.6px;color:#111">False</div><svg class="a" style="left:26px;top:348px" width="9" height="9" viewBox="0 0 9 9"><rect x="0.5" y="0.5" width="8" height="8" fill="#f4f4f4" stroke="#909090"/><path d="M2 4.5h5" stroke="#2a3a90" stroke-width="1"/><path d="M4.5 2v5" stroke="#2a3a90" stroke-width="1"/></svg><div class="t" style="left:44px;top:347px;font-size:13px;font-weight:bold;color:#7d7f84;letter-spacing:-1.5px">ベクトル</div><svg class="a" style="left:26px;top:367px" width="9" height="9" viewBox="0 0 9 9"><rect x="0.5" y="0.5" width="8" height="8" fill="#f4f4f4" stroke="#909090"/><path d="M2 4.5h5" stroke="#2a3a90" stroke-width="1"/><path d="M4.5 2v5" stroke="#2a3a90" stroke-width="1"/></svg><div class="t" style="left:44px;top:366px;font-size:13px;font-weight:bold;color:#7d7f84;letter-spacing:-1.5px">コンターラベル</div><svg class="a" style="left:7px;top:386px" width="9" height="9" viewBox="0 0 9 9"><rect x="0.5" y="0.5" width="8" height="8" fill="#f4f4f4" stroke="#909090"/><path d="M2 4.5h5" stroke="#3a4ab0" stroke-width="1"/></svg><div class="t" style="left:25px;top:385px;font-size:13px;font-weight:bold;color:#7d7f84;letter-spacing:-1.5px">カラールーラー</div><div class="a" style="left:21px;top:401px;width:285px;height:18px;background:#fff"></div><div class="a" style="left:162px;top:401px;width:1px;height:18px;background:#e6e9f1"></div><div class="t" style="left:25px;top:404px;font-size:12.5px;color:#111;letter-spacing:-0.3px">変数</div><div class="t" style="left:167px;top:404px;font-size:11px;color:#111">P1</div><div class="a" style="left:21px;top:420px;width:285px;height:18px;background:#fff"></div><div class="a" style="left:162px;top:420px;width:1px;height:18px;background:#e6e9f1"></div><div class="t" style="left:25px;top:423px;font-size:12.5px;color:#111;letter-spacing:-0.3px">最小値</div><div class="t" style="left:167px;top:423px;font-size:11px;color:#111">-2.970638</div><div class="a" style="left:21px;top:439px;width:285px;height:18px;background:#fff"></div><div class="a" style="left:162px;top:439px;width:1px;height:18px;background:#e6e9f1"></div><div class="t" style="left:25px;top:442px;font-size:12.5px;color:#111;letter-spacing:-0.3px">最大値</div><div class="t" style="left:167px;top:442px;font-size:11px;color:#111">2.676723</div><div class="a" style="left:21px;top:458px;width:285px;height:18px;background:#fff"></div><div class="a" style="left:162px;top:458px;width:1px;height:18px;background:#e6e9f1"></div><div class="t" style="left:25px;top:461px;font-size:12.5px;color:#111;letter-spacing:-3px">リセット</div><div class="a" style="left:21px;top:477px;width:285px;height:18px;background:#fff"></div><div class="a" style="left:162px;top:477px;width:1px;height:18px;background:#e6e9f1"></div><div class="t" style="left:25px;top:480px;font-size:12.5px;color:#111;letter-spacing:-0.3px">色の段数</div><div class="t" style="left:167px;top:480px;font-size:11px;color:#111">16</div><svg class="a" style="left:7px;top:500px" width="9" height="9" viewBox="0 0 9 9"><rect x="0.5" y="0.5" width="8" height="8" fill="#f4f4f4" stroke="#909090"/><path d="M2 4.5h5" stroke="#3a4ab0" stroke-width="1"/></svg><div class="t" style="left:25px;top:499px;font-size:13px;font-weight:bold;color:#7d7f84;letter-spacing:0">不透明度</div><div class="a" style="left:21px;top:515px;width:285px;height:18px;background:#fff"></div><div class="a" style="left:162px;top:515px;width:1px;height:18px;background:#e6e9f1"></div><div class="t" style="left:25px;top:518px;font-size:12.5px;color:#111;letter-spacing:-0.3px">有効</div><div class="t" style="left:167px;top:518px;font-size:11.6px;color:#111">True</div><div class="a" style="left:21px;top:534px;width:285px;height:18px;background:#fff"></div><div class="a" style="left:162px;top:534px;width:1px;height:18px;background:#e6e9f1"></div><div class="t" style="left:25px;top:537px;font-size:12.5px;color:#111;letter-spacing:-0.3px">不透明度</div><div class="t" style="left:167px;top:537px;font-size:11px;color:#111">100</div></div>
<div class="a" style="left:1137px;top:165px;width:15px;height:548px;background:#f0f0f0"></div>
<div class="a" style="left:1138px;top:184px;width:14px;height:461px;background:#a6a6a6"></div>
<svg class="a" style="left:1140px;top:172px" width="9" height="6"><path d="M1 5L4.5 1.5L8 5" stroke="#444" stroke-width="1.6" fill="none"/></svg>
<svg class="a" style="left:1140px;top:702px" width="9" height="6"><path d="M1 1L4.5 4.5L8 1" stroke="#444" stroke-width="1.6" fill="none"/></svg>
<!-- description -->
<div class="a" style="left:831px;top:713px;width:322px;height:68px;background:#eef1f7;border-top:1px solid #fff"></div>
<div class="a" style="left:834px;top:718px;width:318px;height:60px;background:#e8ecf5;border:1px solid #a9acb2"></div>
<div class="a" style="left:830px;top:780px;width:325px;height:1px;background:#a0a4aa"></div>
<!-- property magenta -->
<div class="a" style="left:833px;top:217px;width:306px;height:145px;border:5px solid #ff00ff"></div>
<!-- bottom tabs -->
<div class="a" style="left:835px;top:781px;width:68px;height:19px;border:1px solid #c5e6ec;border-top:none;border-radius:0 0 3px 3px;background:linear-gradient(#fafbfd,#e9edf4)"></div>
<svg class="a" style="left:839px;top:782px" width="14" height="15" viewBox="0 0 14 15">
 <rect x="0.5" y="4.5" width="10" height="10" fill="#f4f6fb" stroke="#2a3a8a"/>
 <path d="M2.5 8h6M2.5 10.5h6M2.5 13h6" stroke="#6a7ab0" stroke-width="1"/>
 <path d="M4 6 L9 1 L13 3 L9 7z" fill="#f2b640"/><path d="M12 1l2 1-1 3z" fill="#30b030"/>
</svg>
<div class="t" style="left:854px;top:786px;font-size:11px;color:#3d3848">Property</div>
<div class="t" style="left:912px;top:786px;font-size:11px;color:#4d5058">Probe</div>

<div class="a" id="status"></div>

<div class="t" style="left:10px;top:811px;font-size:11.5px;color:#262a35">Visualizer Pro</div>
<div class="a" style="left:1112px;top:806px;width:1px;height:22px;background:#9ea2a8"></div>
<div class="a" style="left:1113px;top:806px;width:1px;height:22px;background:#f0f2f4"></div>
<svg class="a" style="left:1144px;top:816px" width="11" height="11" viewBox="0 0 11 11"><g fill="#8c9096"><rect x="8" y="0" width="2" height="2"/><rect x="5" y="3" width="2" height="2"/><rect x="8" y="3" width="2" height="2"/><rect x="2" y="6" width="2" height="2"/><rect x="5" y="6" width="2" height="2"/><rect x="8" y="6" width="2" height="2"/></g></svg>
<div class="bd" style="left:0;top:0;width:1157px;height:1px"></div>
<div class="bd" style="left:0;top:0;width:1px;height:829px"></div>
<div class="bd" style="left:1156px;top:0;width:1px;height:829px"></div>
<div class="bd" style="left:0;top:828px;width:1157px;height:1px"></div>
</body></html>
